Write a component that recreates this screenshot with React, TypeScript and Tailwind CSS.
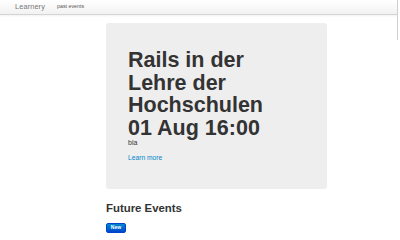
export default function App() {
  return (
    <div className="w-[400px] h-[240px] bg-white overflow-hidden relative" style={{ fontFamily: '"Liberation Sans", Arial, sans-serif' }}>
      <div className="h-[15px] w-[397px] border-b border-[#d4d4d4] bg-gradient-to-b from-white to-[#f2f2f2] shadow-[0_1px_2px_rgba(0,0,0,0.06)] flex items-center">
        <span className="ml-[15px] text-[7.4px] leading-none text-[#777777] font-light tracking-[0.1px]">Learnery</span>
        <span className="ml-[12px] text-[5.3px] leading-none text-[#555555]">past events</span>
      </div>
      <div className="absolute right-[2px] top-0 w-px h-[40px] bg-[#cfcfcf]" />
      <div className="pl-[106px] pt-[8px]">
        <div className="w-[221px] h-[166px] bg-[#eeeeee] rounded-[3px] pl-[22px] pt-[26px]">
          <h1 className="text-[21.5px] leading-[22.5px] font-bold text-[#333333]">
            Rails in der<br />Lehre der<br />Hochschulen<br />01 Aug 16:00
          </h1>
          <p className="text-[7px] leading-[10px] text-[#333333] -mt-[1px]">bla</p>
          <p className="text-[6.7px] leading-[10px] text-[#0088cc] mt-[5px]">Learn more</p>
        </div>
        <h2 className="mt-[13px] text-[11.4px] leading-[12.5px] font-bold text-[#333333]">Future Events</h2>
        <div className="mt-[8px] w-[20px] h-[10px] rounded-[2px] border border-[#0044cc] bg-gradient-to-b from-[#0088cc] to-[#0044cc] flex items-center justify-center">
          <span className="text-[5px] leading-none font-bold text-white">New</span>
        </div>
      </div>
    </div>
  );
}
